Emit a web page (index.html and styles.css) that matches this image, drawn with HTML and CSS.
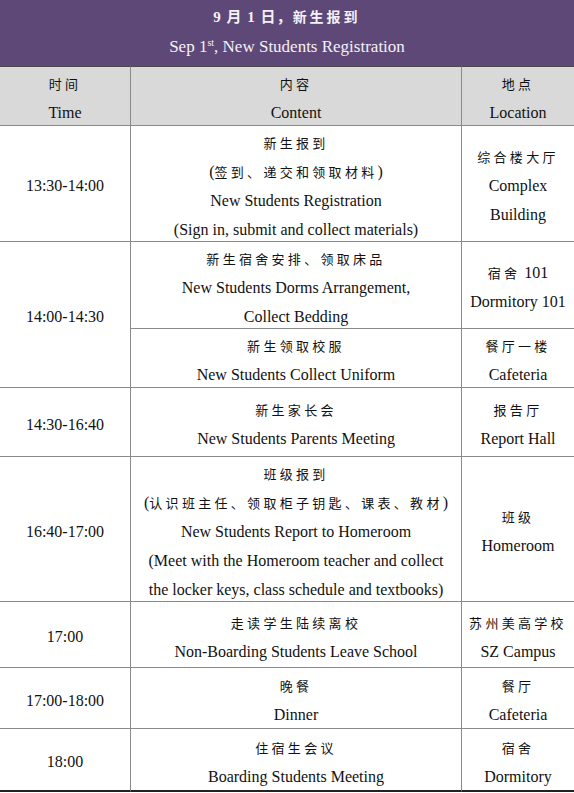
FILE: index.html
```html
<!DOCTYPE html>
<html lang="zh-CN">
<head>
<meta charset="utf-8">
<title>9月1日，新生报到</title>
<link rel="stylesheet" href="styles.css">
</head>
<body>
<div class="page">
  <header class="title">
    <div class="title-zh">9 月 1 日，<span class="zh-b">新生报到</span></div>
    <div class="title-en">Sep 1<sup>st</sup>, New Students Registration</div>
  </header>
  <div class="schedule">
    <div class="cell head c1"><span class="zh">时间</span><span>Time</span></div>
    <div class="cell head c2"><span class="zh">内容</span><span>Content</span></div>
    <div class="cell head c3"><span class="zh">地点</span><span>Location</span></div>

    <div class="cell c1">13:30-14:00</div>
    <div class="cell c2"><span class="zh">新生报到</span><span>(<span class="zh">签到、递交和领取材料</span>)</span><span>New Students Registration</span><span>(Sign in, submit and collect materials)</span></div>
    <div class="cell c3"><span class="zh">综合楼大厅</span><span>Complex</span><span>Building</span></div>

    <div class="cell c1 span2">14:00-14:30</div>
    <div class="cell c2"><span class="zh">新生宿舍安排、领取床品</span><span>New Students Dorms Arrangement,</span><span>Collect Bedding</span></div>
    <div class="cell c3"><span><span class="zh">宿舍</span> 101</span><span>Dormitory 101</span></div>
    <div class="cell c2"><span class="zh">新生领取校服</span><span>New Students Collect Uniform</span></div>
    <div class="cell c3"><span class="zh">餐厅一楼</span><span>Cafeteria</span></div>

    <div class="cell c1">14:30-16:40</div>
    <div class="cell c2"><span class="zh">新生家长会</span><span>New Students Parents Meeting</span></div>
    <div class="cell c3"><span class="zh">报告厅</span><span>Report Hall</span></div>

    <div class="cell c1">16:40-17:00</div>
    <div class="cell c2"><span class="zh">班级报到</span><span>(<span class="zh">认识班主任、领取柜子钥匙、课表、教材</span>)</span><span>New Students Report to Homeroom</span><span>(Meet with the Homeroom teacher and collect</span><span>the locker keys, class schedule and textbooks)</span></div>
    <div class="cell c3"><span class="zh">班级</span><span>Homeroom</span></div>

    <div class="cell c1">17:00</div>
    <div class="cell c2"><span class="zh">走读学生陆续离校</span><span>Non-Boarding Students Leave School</span></div>
    <div class="cell c3"><span class="zh">苏州美高学校</span><span>SZ Campus</span></div>

    <div class="cell c1">17:00-18:00</div>
    <div class="cell c2"><span class="zh">晚餐</span><span>Dinner</span></div>
    <div class="cell c3"><span class="zh">餐厅</span><span>Cafeteria</span></div>

    <div class="cell c1 last">18:00</div>
    <div class="cell c2 last"><span class="zh">住宿生会议</span><span>Boarding Students Meeting</span></div>
    <div class="cell c3 last"><span class="zh">宿舍</span><span>Dormitory</span></div>
  </div>
</div>
</body>
</html>
```

FILE: styles.css
```css
* { box-sizing: border-box; }

html, body {
  margin: 0;
  padding: 0;
  background: #ffffff;
}

.page {
  width: 574px;
  font-family: "Liberation Serif", "Noto Sans CJK SC", serif;
  color: #111111;
  font-size: 16px;
}

.title {
  height: 66px;
  background: #5e4878;
  color: #f4f1f7;
  text-align: center;
  padding-top: 3px;
}

.title-zh {
  height: 29px;
  line-height: 29px;
  font-size: 15px;
  font-weight: bold;
  letter-spacing: 1px;
}

.title-zh .zh-b {
  font-size: 14px;
  letter-spacing: 3px;
}

.title-en {
  height: 30px;
  line-height: 30px;
  font-size: 17px;
}

.title-en sup {
  font-size: 10px;
  line-height: 0;
  vertical-align: 6px;
}

.schedule {
  display: grid;
  grid-template-columns: 130px 331px 113px;
  grid-template-rows: 60px 116px 87px 59px 69px 145px 66px 61px 63px;
}

.cell {
  display: flex;
  flex-direction: column;
  justify-content: center;
  align-items: center;
  text-align: center;
  line-height: 29px;
  padding-top: 4px;
  border-bottom: 1px solid #8a8a8a;
  white-space: nowrap;
}

.cell.c2,
.cell.c3 {
  border-left: 1px solid #8a8a8a;
}

.cell.c1 { grid-column: 1; }
.cell.c2 { grid-column: 2; }
.cell.c3 { grid-column: 3; }

.cell.span2 { grid-row: span 2; }

.cell.head {
  background: #d9d9d9;
  border-top: 1px solid #4a4a4a;
  padding-top: 3px;
}

.cell.last {
  border-bottom: 2px solid #222222;
}

.zh {
  font-family: "Noto Sans CJK SC", sans-serif;
  font-size: 13px;
  letter-spacing: 3.3px;
  font-weight: 400;
}
```
